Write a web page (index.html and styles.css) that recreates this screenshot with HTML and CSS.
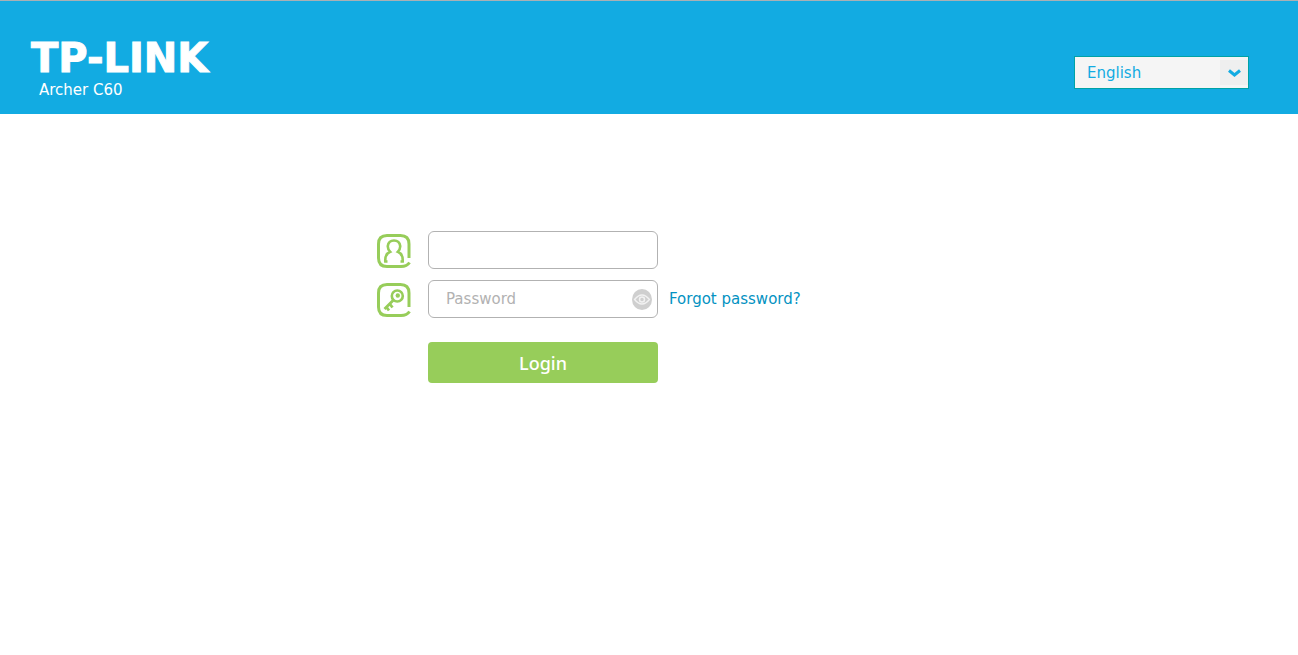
FILE: index.html
```
<!DOCTYPE html>
<html lang="en">

<head>
  <meta charset="UTF-8">
  <meta name="viewport" content="width=device-width, initial-scale=1.0">
  <title>Archer C60</title>
  <link rel="stylesheet" href="styles.css">
</head>

<body>

  <header class="top">
    <div class="brand">
      <div class="logo">TP-LINK</div>
      <div class="model">Archer C60</div>
    </div>
    <div class="language">
      <select id="language" name="language" aria-label="Language">
        <option>English</option>
      </select>
      <span class="language-arrow">
        <svg width="14" height="10" viewBox="0 0 14 10">
          <path d="M2 2.5 L7.500 7 L13 2.500" fill="none" stroke="#12abe2" stroke-width="3" />
        </svg>
      </span>
    </div>
  </header>

  <main>
    <form class="login-form" id="login-form">
      <label class="icon" for="username" aria-label="Username">
        <svg width="34" height="36" viewBox="0 0 34 36" fill="none" stroke="#97cd5a">
          <path d="M32 26 V12 Q32 3.500 23.500 3.500 H10 Q1.500 3.500 1.500 12 V26 Q1.500 34.500 10 34.500 H24 Q30 34.500 32.500 30.500" stroke-width="3" />
          <path d="M10.500 29.500 H8.300 Q7.800 22 13.200 19.800 Q10.600 17 10.800 14 Q11.500 8.500 17 8.500 Q22.500 8.500 23.200 14 Q23.400 17 20.800 19.800 Q26.200 22 25.700 29.500 H23.500" stroke-width="2.6" />
        </svg>
      </label>
      <input type="text" id="username" name="username">

      <label class="icon" for="password" aria-label="Password">
        <svg width="34" height="36" viewBox="0 0 34 36" fill="none" stroke="#97cd5a">
          <path d="M32 26 V12 Q32 3.500 23.500 3.500 H10 Q1.500 3.500 1.500 12 V26 Q1.500 34.500 10 34.500 H24 Q30 34.500 32.500 30.500" stroke-width="3" />
          <circle cx="20.3" cy="15" r="5.5" stroke-width="2.6" />
          <circle cx="20.8" cy="14.5" r="2.2" fill="#97cd5a" stroke="none" />
          <path d="M16.500 19 L7.500 28 M9 25.500 L12 29.500 M12.500 22.500 L15.500 26.500" stroke-width="2.8" />
        </svg>
      </label>
      <div class="password-box">
        <input type="password" id="password" name="password" placeholder="Password">
        <button type="button" class="eye" id="eye" aria-label="Show password">
          <svg width="20" height="21" viewBox="0 0 20 21">
            <ellipse cx="10" cy="10.5" rx="10" ry="10.5" fill="#cfcfcf" />
            <path d="M2.500 10.500 Q10 1.500 17.500 10.500 Q10 19.500 2.500 10.500 Z" fill="none" stroke="#f2f2f2" stroke-width="1.3" />
            <circle cx="10" cy="10.500" r="2.5" fill="none" stroke="#f2f2f2" stroke-width="1.5" />
          </svg>
        </button>
      </div>
      <a class="forgot" href="#">Forgot password?</a>

      <button type="submit" class="login-button">Login</button>
    </form>
  </main>

  <script>
    document.getElementById('eye').addEventListener('click', function () {
      const password = document.getElementById('password');
      password.type = password.type === 'password' ? 'text' : 'password';
    });

    document.getElementById('login-form').addEventListener('submit', function (event) {
      event.preventDefault();
    });
  </script>
</body>

</html>
```
FILE: styles.css
```
* {
  margin: 0;
  padding: 0;
  box-sizing: border-box;
}

body {
  font-family: Verdana, "DejaVu Sans", sans-serif;
  font-size: 15px;
  background-color: #fff;
}

/* Header */
.top {
  display: flex;
  align-items: flex-start;
  justify-content: space-between;
  padding: 36px 49px 12px 31px;
  border-top: 1px solid #a9b0b4;
  background-color: #12abe2;
  color: #fff;
}

.logo {
  font-size: 40px;
  font-weight: bold;
  line-height: 42px;
  -webkit-text-stroke: 1px #fff;
}

.model {
  padding-left: 8px;
  line-height: 23px;
}

.language {
  position: relative;
  margin-top: 19px;
}

.language select {
  display: block;
  width: 175px;
  height: 33px;
  padding: 0 32px 0 12px;
  border: 1px solid #00a2a6;
  border-radius: 0;
  background-color: #f5f5f5;
  color: #12abe2;
  font: inherit;
  appearance: none;
}

.language-arrow {
  position: absolute;
  top: 4px;
  right: 1px;
  display: flex;
  align-items: center;
  justify-content: center;
  width: 28px;
  height: 25px;
  background-color: #efefef;
  pointer-events: none;
}

/* Login form */
.login-form {
  display: grid;
  grid-template-columns: 34px 230px auto;
  justify-content: start;
  align-items: center;
  gap: 11px 17px;
  margin-top: 117px;
  margin-left: calc(50% - 272px);
}

.icon {
  grid-column: 1;
}

.icon svg {
  display: block;
}

.login-form input {
  display: block;
  width: 230px;
  height: 38px;
  padding: 0 17px;
  border: 1px solid #b2b2b2;
  border-radius: 6px;
  color: #333;
  font: inherit;
}

.login-form input::placeholder {
  color: #b2b2b2;
}

.password-box {
  position: relative;
}

.login-form .password-box input {
  padding-right: 32px;
}

.eye {
  position: absolute;
  top: 9px;
  right: 6px;
  border: none;
  background: none;
  cursor: pointer;
}

.eye svg {
  display: block;
}

.forgot {
  margin-left: -6px;
  color: #0492c2;
  text-decoration: none;
}

.login-button {
  grid-column: 2;
  height: 41px;
  margin-top: 13px;
  border: none;
  border-radius: 4px;
  background-color: #97cd5a;
  color: #fff;
  font-family: "Noto Sans", "Open Sans", sans-serif;
  font-size: 18px;
  font-weight: 500;
  cursor: pointer;
}
```
